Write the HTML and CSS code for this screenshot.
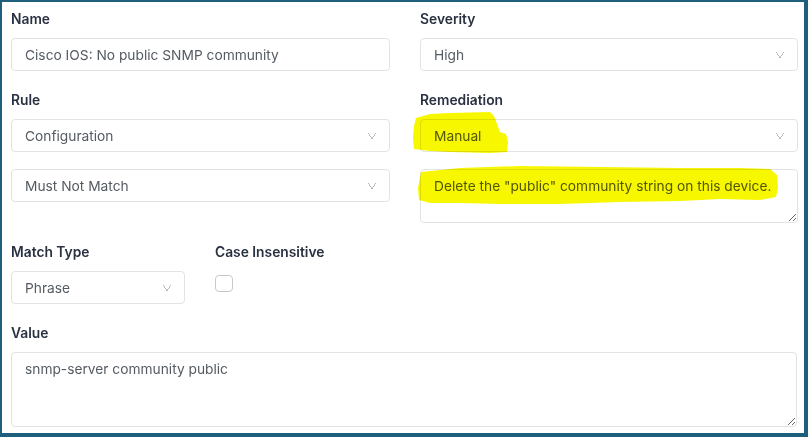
FILE: index.html
```html
<!DOCTYPE html>
<html>
<head>
<meta charset="utf-8">
<link rel="stylesheet" href="styles.css">
</head>
<body>
<div class="frame">
  <div class="grid">
    <div class="field">
      <label class="lbl">Name</label>
      <div class="input">Cisco IOS: No public SNMP community</div>
    </div>
    <div class="field">
      <label class="lbl">Severity</label>
      <div class="input select">High<span class="chev"></span></div>
    </div>
    <div class="field">
      <label class="lbl">Rule</label>
      <div class="input select">Configuration<span class="chev"></span></div>
      <div class="input select gap">Must Not Match<span class="chev"></span></div>
    </div>
    <div class="field">
      <label class="lbl">Remediation</label>
      <div class="input select">Manual<span class="chev"></span></div>
      <textarea class="ta rem">Delete the "public" community string on this device.</textarea>
    </div>
  </div>
  <div class="row3">
    <div class="field match">
      <label class="lbl">Match Type</label>
      <div class="input select">Phrase<span class="chev"></span></div>
    </div>
    <div class="field">
      <label class="lbl">Case Insensitive</label>
      <span class="check"></span>
    </div>
  </div>
  <div class="field">
    <label class="lbl">Value</label>
    <textarea class="ta val">snmp-server community public</textarea>
  </div>
  <svg class="hl" width="808" height="437" viewBox="0 0 808 437">
    <path d="M416 118 L430 114 L450 113 L490 112 L494 116 L497 124 L500 132 L506 134 L508 142 L507 152 L490 153 L450 152 L430 151 L414 149 L413 138 L414 126 Z" />
    <path d="M421 172 L460 168 L520 166 L600 167 L680 168 L740 168 L770 169 L777 175 L778 188 L776 197 L760 200 L720 199 L680 201 L620 202 L560 204 L500 204 L460 203 L430 203 L419 200 L418 188 Z" />
  </svg>
</div>
</body>
</html>
```
FILE: styles.css
```css
* { box-sizing: border-box; }
html, body { margin: 0; padding: 0; background: #fff; }
body { font-family: Inter, "Noto Sans", sans-serif; }
.frame {
  position: relative;
  width: 808px;
  height: 437px;
  border-style: solid;
  border-color: #1f5f7e;
  border-width: 2px 4px 4px 2px;
  padding: 8px 6px 0 9px;
  background: #fff;
}
.grid {
  display: grid;
  grid-template-columns: 379px 378px;
  column-gap: 30px;
  row-gap: 20px;
}
.field { display: flex; flex-direction: column; }
.lbl {
  display: block;
  font-size: 13.8px;
  font-weight: 600;
  color: #2a3242;
  line-height: 18px;
  margin-bottom: 10px;
}
.input {
  position: relative;
  height: 33px;
  border: 1px solid #e3e3e3;
  border-radius: 4px;
  padding: 0 12px 0 13px;
  font-size: 13.75px;
  color: #555b63;
  display: flex;
  align-items: center;
  background: #fff;
}
.gap { margin-top: 17px; }
.chev {
  position: absolute;
  right: 13px;
  top: 13px;
  width: 8px;
  height: 6px;
  background:
    linear-gradient(to top right, transparent 45%, #b5b5b5 46%, #b5b5b5 56%, transparent 57%) left/50% 100% no-repeat,
    linear-gradient(to top left, transparent 45%, #b5b5b5 46%, #b5b5b5 56%, transparent 57%) right/50% 100% no-repeat;
}
.ta {
  display: block;
  border: 1px solid #e3e3e3;
  border-radius: 4px;
  padding: 8px 12px 8px 13px;
  font-family: Inter, "Noto Sans", sans-serif;
  font-size: 13.75px;
  color: #555b63;
  resize: both;
  outline: none;
  background: #fff;
}
.rem { height: 54px; margin-top: 17px; width: 378px; }
.row3 {
  display: flex;
  gap: 30px;
  margin-top: 20px;
}
.match { width: 174px; }
.check {
  display: block;
  width: 18px;
  height: 17px;
  border: 1.5px solid #c9c9c9;
  border-radius: 4px;
  margin-top: 4px;
}
.row3 + .field { margin-top: 20px; }
.val { height: 75px; width: 786px; }
.hl {
  position: absolute;
  left: -2px;
  top: -2px;
  pointer-events: none;
  mix-blend-mode: multiply;
}
.hl path { fill: #f7f700; }
```
